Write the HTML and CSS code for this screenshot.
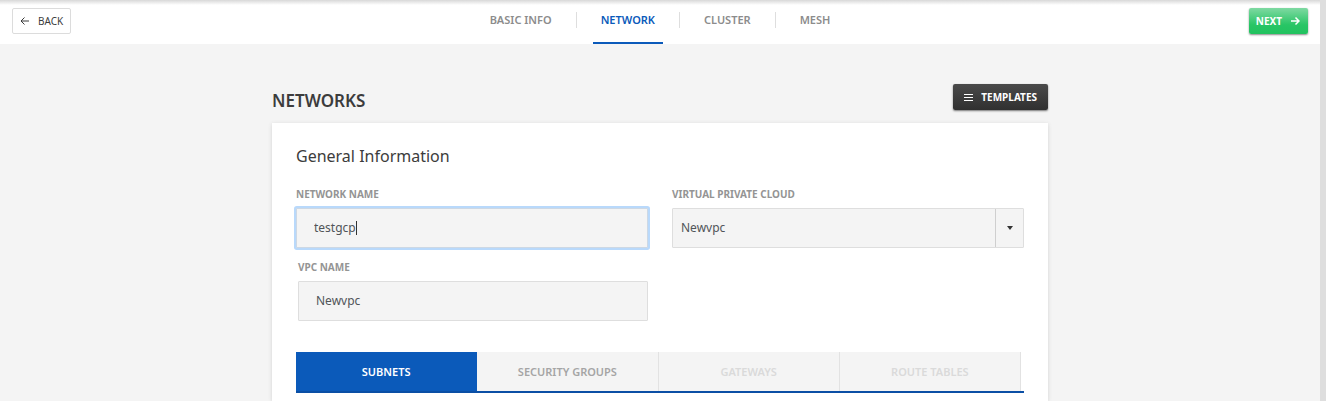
FILE: index.html
```html
<!DOCTYPE html>
<html lang="en">
<head>
<meta charset="utf-8">
<title>Networks</title>
<link rel="stylesheet" href="styles.css">
</head>
<body>
<div class="page">
  <header class="topbar">
    <button class="btn btn-back" type="button">
      <svg class="icon" viewBox="0 0 10 10" aria-hidden="true"><path d="M9 5H1.500M4.500 1.500L1 5l3.500 3.500"/></svg>
      BACK
    </button>
    <nav class="steps">
      <a class="step" href="#basic">BASIC INFO</a>
      <span class="divider"></span>
      <a class="step step-active" href="#network">NETWORK</a>
      <span class="divider"></span>
      <a class="step" href="#cluster">CLUSTER</a>
      <span class="divider"></span>
      <a class="step" href="#mesh">MESH</a>
    </nav>
    <button class="btn btn-next" type="button">
      NEXT
      <svg class="icon icon-bold" viewBox="0 0 10 10" aria-hidden="true"><path d="M1 5h8M5.500 1.500L9 5 5.500 8.500"/></svg>
    </button>
  </header>
  <main class="content">
    <div class="heading-row">
      <h1 class="title">NETWORKS</h1>
      <button class="btn btn-templates" type="button">
        <svg class="icon" viewBox="0 0 10 10" aria-hidden="true"><path d="M0 2.500h9M0 5.500h9M0 8.500h9"/></svg>
        TEMPLATES
      </button>
    </div>
    <section class="card">
      <h2 class="subtitle">General Information</h2>
      <form class="form">
        <div class="field">
          <label class="label" for="network-name">NETWORK NAME</label>
          <div class="control-box">
            <input class="control control-focus" id="network-name" type="text" value="testgcp">
            <span class="caret"></span>
          </div>
        </div>
        <div class="field">
          <label class="label" for="vpc">VIRTUAL PRIVATE CLOUD</label>
          <div class="control-box">
            <select class="control select" id="vpc"><option>Newvpc</option></select>
            <span class="select-arrow"></span>
          </div>
        </div>
        <div class="field field-inset">
          <label class="label" for="vpc-name">VPC NAME</label>
          <input class="control" id="vpc-name" type="text" value="Newvpc">
        </div>
      </form>
      <div class="tabs" role="tablist">
        <button class="tab tab-active" type="button" role="tab" aria-selected="true">SUBNETS</button>
        <button class="tab" type="button" role="tab">SECURITY GROUPS</button>
        <button class="tab" type="button" role="tab" disabled>GATEWAYS</button>
        <button class="tab" type="button" role="tab" disabled>ROUTE TABLES</button>
      </div>
    </section>
  </main>
</div>
</body>
</html>
```
FILE: styles.css
```css
* { box-sizing: border-box; }
body {
  margin: 0;
  min-height: 100vh;
  background: #f4f4f4;
  border-right: 6px solid #dedede;
  color: #3c3c3c;
  font-family: "Noto Sans", "Open Sans", sans-serif;
  font-size: 11px;
  line-height: 16px;
}
button, input, select { font: inherit; }
.topbar {
  display: grid;
  grid-template-columns: 1fr auto 1fr;
  align-items: start;
  height: 44px;
  padding: 0 12px;
  background: linear-gradient(#d8d8d8, #fff 5px);
}
.btn {
  display: flex;
  align-items: center;
  height: 26px;
  border: 0;
  border-radius: 2px;
  font-size: 10px;
  font-weight: 700;
}
.icon {
  width: 10px;
  height: 10px;
  fill: none;
  stroke: currentColor;
  stroke-width: 1;
}
.icon-bold { stroke-width: 1.5; }
.btn-back {
  justify-self: start;
  gap: 8px;
  margin-top: 8px;
  padding: 0 7px;
  border: 1px solid #dcdcdc;
  background: #fff;
  color: #3c3c3c;
  font-weight: 400;
}
.btn-next {
  justify-self: end;
  gap: 8px;
  margin-top: 8px;
  padding: 0 8px 0 7px;
  background: linear-gradient(#7fd9a2, #28c565 65%, #22c25f);
  box-shadow: 0 1px 2px #8a8a8a;
  color: #fff;
}
.steps {
  display: flex;
  gap: 16px;
}
.step {
  height: 44px;
  padding: 12px 8px 0;
  border-bottom: 2px solid transparent;
  color: #8c8c8c;
  font-size: 11px;
  font-weight: 600;
  text-decoration: none;
}
.step-active {
  border-color: #0b5aba;
  color: #0b5aba;
}
.divider {
  width: 1px;
  height: 16px;
  margin-top: 12px;
  background: #dedede;
}
.content {
  max-width: 776px;
  margin: 0 auto;
  padding-top: 40px;
}
.heading-row {
  display: flex;
  justify-content: space-between;
  height: 39px;
}
.title {
  margin: 5px 0 0;
  font-size: 17px;
  font-weight: 600;
  line-height: 24px;
}
.btn-templates {
  gap: 7px;
  padding: 0 11px;
  background: linear-gradient(#4a4a4a, #303030);
  box-shadow: 0 1px 2px #777;
  color: #fff;
}
.card {
  padding: 21px 24px 8px;
  background: #fff;
  box-shadow: 0 1px 4px #d4d4d4;
}
.subtitle {
  margin: 0 0 18px;
  font-size: 16px;
  font-weight: 400;
  line-height: 24px;
}
.form {
  display: grid;
  grid-template-columns: 1fr 1fr;
  gap: 11px 24px;
}
.field {
  display: flex;
  flex-direction: column;
  gap: 6px;
}
.field-inset { padding-left: 2px; }
.label {
  color: #949494;
  font-size: 10px;
  font-weight: 700;
}
.control-box { position: relative; }
.control {
  display: block;
  width: 100%;
  height: 40px;
  padding: 0 17px 1px;
  border: 1px solid #dedede;
  border-radius: 1px;
  outline: 0;
  background: #f4f4f4;
  color: #505458;
  font-size: 12px;
}
.control-focus {
  border-color: #cdd8e4;
  box-shadow: 0 0 0 2px #b9d9fb;
}
.caret {
  position: absolute;
  top: 13px;
  left: 60px;
  width: 1px;
  height: 14px;
  background: #333;
}
.select {
  appearance: none;
  padding: 0 40px 0 8px;
}
.select-arrow {
  position: absolute;
  top: 1px;
  right: 1px;
  bottom: 1px;
  display: grid;
  place-items: center;
  width: 28px;
  border-left: 1px solid #cfcfcf;
  pointer-events: none;
}
.select-arrow::before {
  content: "";
  border: 3px solid transparent;
  border-top: 4px solid #333;
  border-bottom: 0;
}
.tabs {
  display: grid;
  grid-template-columns: repeat(4, 1fr);
  margin-top: 31px;
  padding-right: 3px;
  border-bottom: 2px solid #0b4fa5;
}
.tab {
  height: 39px;
  padding: 0;
  border: 0;
  border-right: 1px solid #e2e2e2;
  background: #f4f4f4;
  color: #a5a5a5;
  font-size: 11px;
  font-weight: 600;
}
.tab:disabled { color: #dadada; }
.tab-active {
  border-color: #0b5aba;
  background: #0b5aba;
  color: #fff;
}
```
